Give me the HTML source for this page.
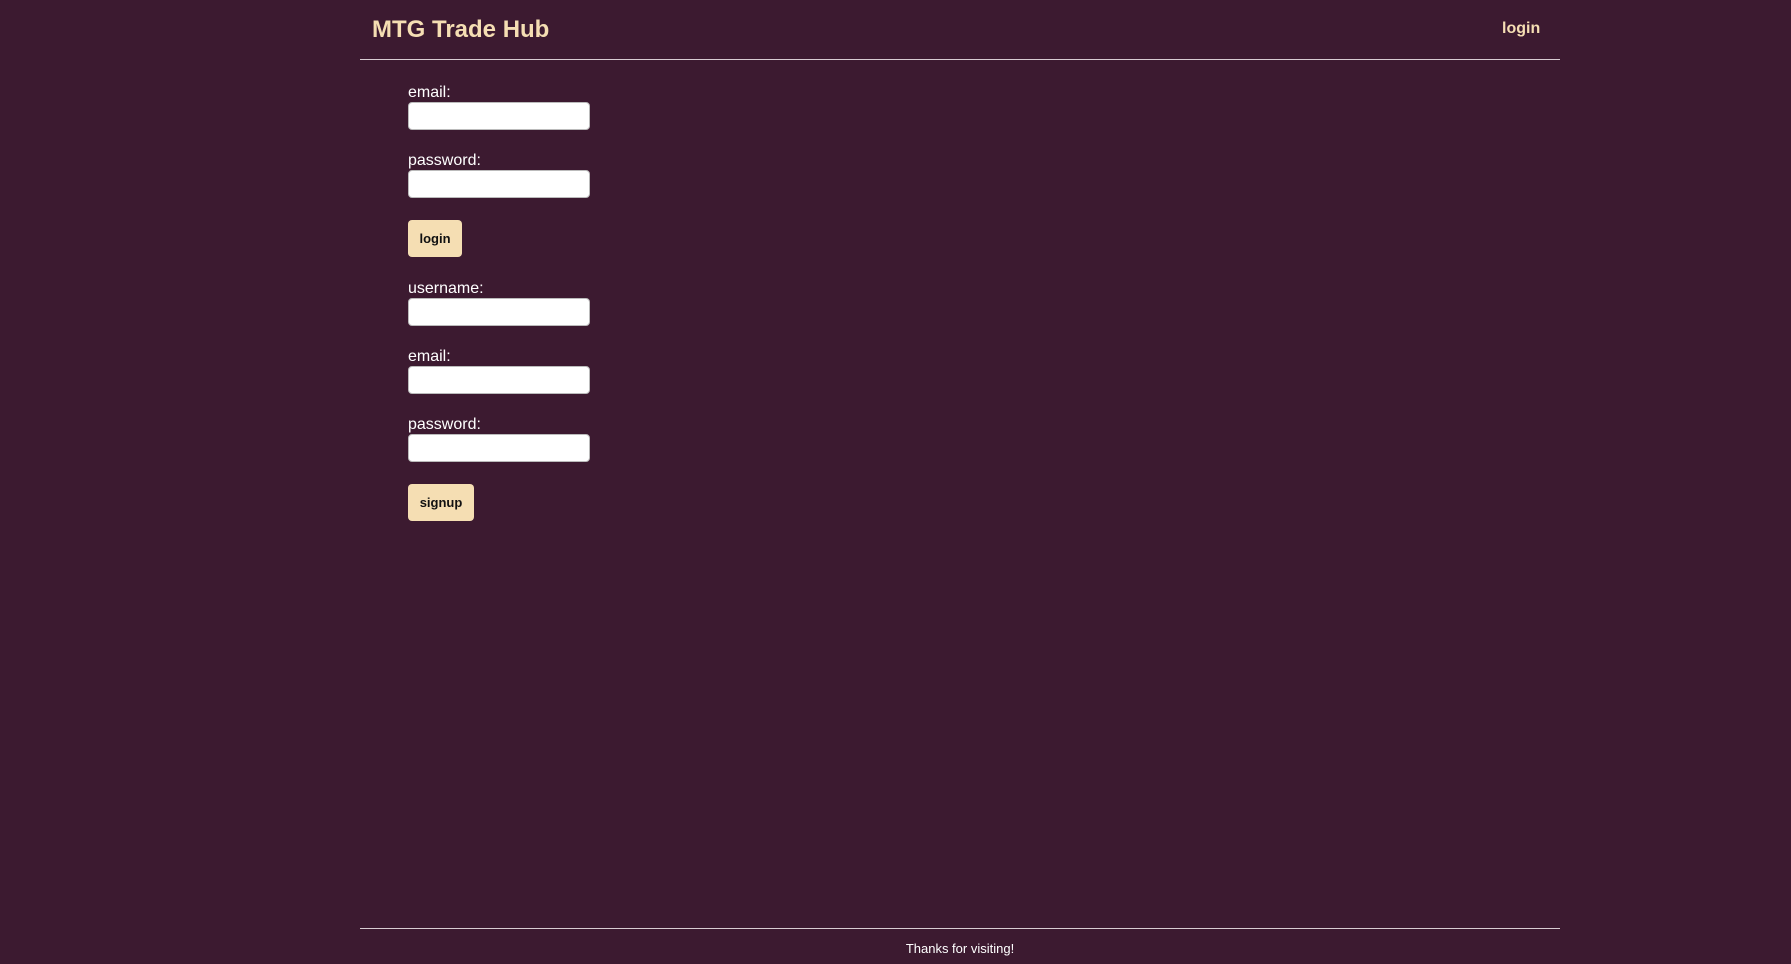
<!DOCTYPE html>
<html><head><meta charset="utf-8"><style>
html,body{margin:0;padding:0;background:#3c1a30;width:1791px;height:964px;overflow:hidden;font-family:"Liberation Sans",Arial,sans-serif;}
.a{position:absolute;white-space:nowrap;}
.title{left:372px;top:16px;font-size:24px;font-weight:bold;color:#f5deb3;}
.nav{left:1502px;top:20px;font-size:16px;font-weight:bold;color:#f5deb3;}
.hr{position:absolute;left:360px;width:1200px;height:1px;background:#d8ccd2;}
.lbl{left:408px;font-size:16px;color:#fff;}
.inp{position:absolute;left:408px;width:180px;height:26px;background:#fff;border:1px solid #bbb;border-radius:4px;}
.btn{position:absolute;left:408px;height:37px;background:#f5deb3;border-radius:4px;font-size:13px;font-weight:bold;color:#111;text-align:center;line-height:37px;}
.foot{top:941px;font-size:13px;color:#fff;}
</style></head><body>
<div class="a title">MTG Trade Hub</div>
<div class="a nav">login</div>
<div class="hr" style="top:59px"></div>

<div class="a lbl" style="top:84px">email:</div>
<div class="inp" style="top:102px"></div>
<div class="a lbl" style="top:152px">password:</div>
<div class="inp" style="top:170px"></div>
<div class="btn" style="top:220px;width:54px">login</div>

<div class="a lbl" style="top:280px">username:</div>
<div class="inp" style="top:298px"></div>
<div class="a lbl" style="top:348px">email:</div>
<div class="inp" style="top:366px"></div>
<div class="a lbl" style="top:416px">password:</div>
<div class="inp" style="top:434px"></div>
<div class="btn" style="top:484px;width:66px">signup</div>

<div class="hr" style="top:928px"></div>
<div class="a foot" style="left:0;width:1920px;text-align:center;">Thanks for visiting!</div>
</body></html>
